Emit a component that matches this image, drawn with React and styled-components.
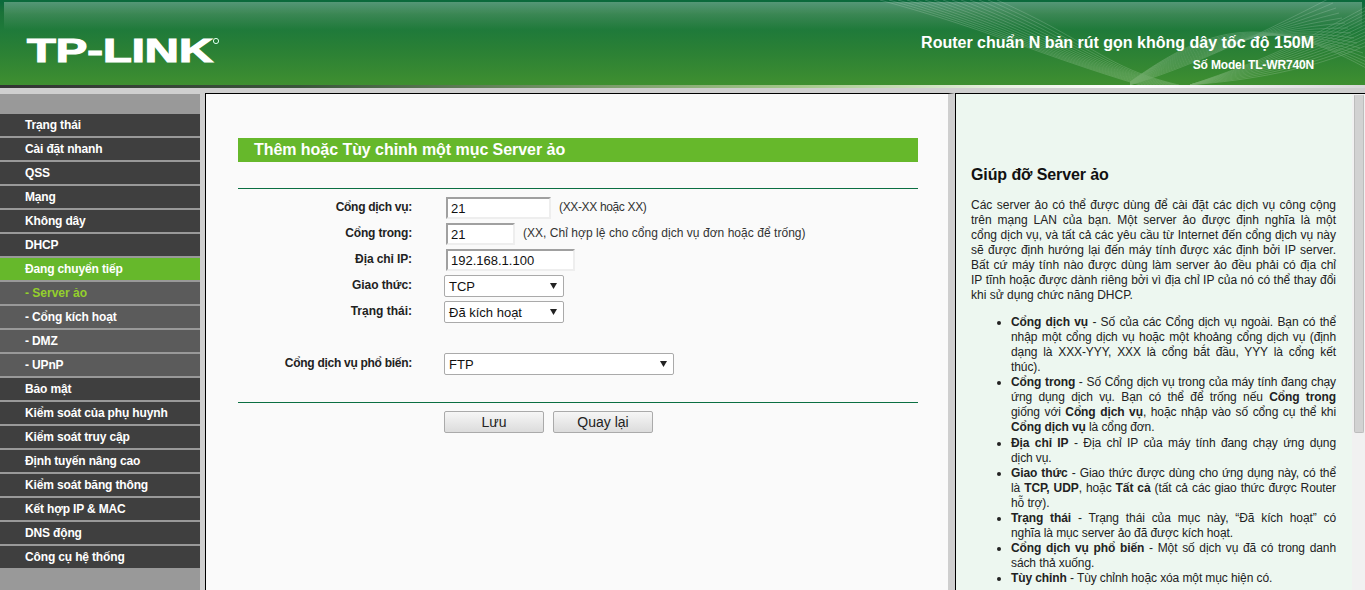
import React from "react";
import styled, { createGlobalStyle } from "styled-components";

const Global = createGlobalStyle`
  html, body { margin: 0; padding: 0; height: 100%; overflow: hidden; background: #cfcfcf; }
  #root { height: 100%; }
  * { box-sizing: border-box; }
`;

const Page = styled.div`
  width: 1365px;
  height: 590px;
  display: flex;
  flex-direction: column;
  overflow: hidden;
  font-family: "Liberation Sans", Arial, sans-serif;
  font-size: 12px;
  color: #111;
`;

const Banner = styled.header`
  position: relative;
  flex: 0 0 85px;
  background: linear-gradient(#0b6a3c 0, #0b6a3c 2px, #1a7238 12px, #1f7a3a 30px, #2a8035 50px, #3f8f30 85px);
  overflow: hidden;

  &::before {
    content: "";
    position: absolute;
    top: 2px;
    left: 4px;
    right: 3px;
    height: 28px;
    background: linear-gradient(rgba(255, 255, 255, 0.3), rgba(255, 255, 255, 0.14) 12px, rgba(255, 255, 255, 0));
  }
`;

const BannerArt = styled.svg`
  position: absolute;
  inset: 0;
`;

const Logo = styled.svg`
  position: absolute;
  left: 27px;
  top: 34px;
  overflow: visible;
`;

const BannerText = styled.div`
  position: absolute;
  right: 51px;
  top: 33px;
  text-align: right;
  color: #fff;
  font-weight: bold;
`;

const Product = styled.div`
  font-size: 16px;
  line-height: 20px;
`;

const Model = styled.div`
  font-size: 12px;
  line-height: 14px;
  margin-top: 5px;
  letter-spacing: -0.15px;
`;

const BannerEdge = styled.div`
  flex: 0 0 3px;
  background: linear-gradient(90deg, #333 0, #3a553a 300px, #a5c98a 800px, #e8f0e0 1000px, #fff 1130px, #d8d8d8 1365px);
`;

const Strip = styled.div`
  flex: 0 0 5px;
  background: #cfcfcf;
`;

const Columns = styled.div`
  flex: 1;
  display: flex;
  min-height: 0;
`;

const Sidebar = styled.nav`
  flex: 0 0 205px;
  background: #999;
  border-top: 1px solid #cfcfcf;
  border-right: 5px solid #cfcfcf;
  padding-top: 20px;
  display: flex;
  flex-direction: column;
  gap: 2px;
`;

const NavItem = styled.a`
  height: 22px;
  line-height: 22px;
  padding-left: 25px;
  font-weight: bold;
  font-size: 12px;
  letter-spacing: ${p => (p.$current ? "0" : "-0.15px")};
  background: ${p => (p.$active ? "#66b82b" : p.$sub ? "#5b5b5b" : "#3f3f3f")};
  color: ${p => (p.$current ? "#94d02c" : "#fff")};
  flex: none;
`;

const Main = styled.main`
  flex: 0 0 750px;
  background: #fafafa;
  border-top: 1px solid #000;
  border-left: 1px solid #000;
  border-right: 7px solid #cfcfcf;
  padding: 44px 30px 0 32px;
`;

const SectionTitle = styled.h1`
  margin: 0;
  height: 24px;
  line-height: 23px;
  padding-left: 16px;
  background: #66b82b;
  color: #fff;
  font-size: 16px;
  font-weight: bold;
  letter-spacing: -0.05px;
`;

const Rule = styled.div`
  height: 1px;
  background: #0b6f42;
  margin-top: ${p => p.$top}px;
`;

const Form = styled.div`
  padding-top: 8px;
  display: flex;
  flex-direction: column;
  gap: 4px;
`;

const Row = styled.div`
  display: grid;
  grid-template-columns: 174px 1fr;
  column-gap: 32px;
  align-items: center;
  height: 22px;
  margin-top: ${p => p.$top || 0}px;
`;

const Label = styled.label`
  text-align: right;
  font-weight: bold;
  color: #222;
  font-size: 12px;
  letter-spacing: ${p => p.$spacing ?? -0.28}px;
  padding-bottom: 3px;
`;

const Field = styled.div`
  display: flex;
  align-items: center;
  gap: 8px;
`;

const Input = styled.input`
  width: ${p => p.$w}px;
  height: 22px;
  margin-left: 2px;
  padding: 1px 3px;
  border: 2px solid;
  border-color: #a0a0a0 #eee #eee #a0a0a0;
  background: #fff;
  font: 13px "Liberation Sans", Arial, sans-serif;
  color: #111;
`;

const Hint = styled.span`
  color: #333;
  font-size: 12px;
  letter-spacing: ${p => p.$spacing || 0}px;
  padding-bottom: 3px;
`;

const SelectBox = styled.div`
  width: ${p => p.$w}px;
  height: 22px;
  border: 1px solid #aaa;
  border-radius: 2px;
  background: #fff;
  padding: 0 6px 0 4px;
  display: flex;
  align-items: center;
  justify-content: space-between;
  font-size: 13px;
  color: #111;
`;

const Caret = styled.svg`
  flex: none;
`;

const Buttons = styled.div`
  display: flex;
  gap: 9px;
  padding: 8px 0 0 206px;
`;

const Button = styled.button`
  width: 100px;
  height: 22px;
  padding: 0;
  border: 1px solid #aaa;
  border-radius: 2px;
  background: linear-gradient(#f6f6f6, #dcdcdc);
  font: 14px "Liberation Sans", Arial, sans-serif;
  color: #222;
`;

const Help = styled.aside`
  flex: 1;
  min-width: 0;
  display: flex;
  background: #edf7f0;
  border-top: 1px solid #000;
  border-left: 1px solid #000;
`;

const HelpBody = styled.div`
  flex: 1;
  min-width: 0;
  padding: 72px 16px 0 15px;
  font-size: 12px;
  line-height: 15px;
  text-align: justify;
  color: #222;
`;

const HelpTitle = styled.h2`
  margin: 0 0 14px;
  font-size: 16px;
  line-height: 18px;
  font-weight: bold;
  letter-spacing: -0.1px;
  color: #111;
`;

const Para = styled.p`
  margin: 0;
`;

const List = styled.ul`
  margin: 12px 0 0;
  padding: 0 0 0 40px;
  letter-spacing: -0.1px;

  & > li:nth-child(3) {
    margin-top: 1px;
  }
`;

const Line = styled.span`
  display: block;
  white-space: nowrap;
  text-align: justify;
  text-align-last: justify;
`;

const Scrollbar = styled.div`
  flex: 0 0 13px;
  background: #f1f1f1;
  padding: 1px 1px 0 2px;
`;

const Thumb = styled.div`
  height: 338px;
  background: #d2d2d2;
  border: 1px solid #bdbdbd;
  border-top-color: #d2d2d2;
  border-radius: 0 0 2px 2px;
`;

const nav = [
  ["Trạng thái"], ["Cài đặt nhanh"], ["QSS"], ["Mạng"], ["Không dây"], ["DHCP"],
  ["Đang chuyển tiếp", "active"], ["- Server ảo", "current"], ["- Cổng kích hoạt", "sub"], ["- DMZ", "sub"], ["- UPnP", "sub"],
  ["Bảo mật"], ["Kiểm soát của phụ huynh"], ["Kiểm soát truy cập"], ["Định tuyến nâng cao"], ["Kiểm soát băng thông"],
  ["Kết hợp IP & MAC"], ["DNS động"], ["Công cụ hệ thống"],
];

const wave = [];
for (let i = 0; i < 14; i++) {
  wave.push(`M${880 + i * 9} 0 C ${990 + i * 8} ${30 + i}, ${1040 + i * 5} ${55 + i}, ${1140 + i * 3} 85`);
}
const fan = [];
for (let i = 0; i < 16; i++) {
  fan.push(`M1130 ${85 - i * 0.2} C ${1180 + i * 2} ${70 - i * 3}, ${1250 + i} ${40 - i * 2}, ${1330 + i * 3} ${-2 + i * 5}`);
}
const fan2 = [];
for (let i = 0; i < 12; i++) {
  fan2.push(`M1190 85 C ${1250 + i * 2} ${80 - i * 2}, 1310 ${70 - i * 3}, 1365 ${46 - i * 3.5}`);
}

const Select = ({ w, children }) => (
  <SelectBox $w={w}>
    <span>{children}</span>
    <Caret width="7" height="6" viewBox="0 0 7 6"><path d="M0 0h7L3.5 6z" fill="#222" /></Caret>
  </SelectBox>
);

export default function App() {
  return (
    <Page>
      <Global />
      <Banner>
        <BannerArt width="1365" height="85" viewBox="0 0 1365 85">
          <g fill="none" stroke="#fff" strokeWidth="0.6" opacity="0.28">
            {wave.map((d, i) => <path key={i} d={d} />)}
            {fan.map((d, i) => <path key={i} d={d} />)}
            {fan2.map((d, i) => <path key={i} d={d} />)}
          </g>
        </BannerArt>
        <Logo width="195" height="30" viewBox="0 0 195 30">
          <text x="0" y="28" textLength="186" lengthAdjust="spacingAndGlyphs" fontFamily="Liberation Sans" fontWeight="bold" fontSize="33" fill="#fff" stroke="#fff" strokeWidth="1.2">TP-LINK</text>
          <circle cx="189" cy="7" r="2.6" fill="none" stroke="#dfe" strokeWidth="1" />
        </Logo>
        <BannerText>
          <Product>Router chuẩn N bản rút gọn không dây tốc độ 150M</Product>
          <Model>Số Model TL-WR740N</Model>
        </BannerText>
      </Banner>
      <BannerEdge />
      <Strip />
      <Columns>
        <Sidebar>
          {nav.map(([t, k]) => (
            <NavItem key={t} $active={k === "active"} $current={k === "current"} $sub={k === "sub" || k === "current"}>{t}</NavItem>
          ))}
        </Sidebar>
        <Main>
          <SectionTitle>Thêm hoặc Tùy chỉnh một mục Server ảo</SectionTitle>
          <Rule $top={26} />
          <Form>
            <Row><Label>Cổng dịch vụ:</Label><Field><Input $w={105} defaultValue="21" /><Hint $spacing={-0.35}>(XX-XX hoặc XX)</Hint></Field></Row>
            <Row><Label $spacing={-0.18}>Cổng trong:</Label><Field><Input $w={69} defaultValue="21" /><Hint $spacing={0.04}>(XX, Chỉ hợp lệ cho cổng dịch vụ đơn hoặc để trống)</Hint></Field></Row>
            <Row><Label $spacing={-0.1}>Địa chỉ IP:</Label><Field><Input $w={129} defaultValue="192.168.1.100" /></Field></Row>
            <Row><Label $spacing={-0.08}>Giao thức:</Label><Field><Select w={120}>TCP</Select></Field></Row>
            <Row><Label $spacing={0}>Trạng thái:</Label><Field><Select w={120}>Đã kích hoạt</Select></Field></Row>
            <Row $top={26}><Label>Cổng dịch vụ phổ biến:</Label><Field><Select w={230}>FTP</Select></Field></Row>
          </Form>
          <Rule $top={27} />
          <Buttons><Button>Lưu</Button><Button>Quay lại</Button></Buttons>
        </Main>
        <Help>
          <HelpBody>
            <HelpTitle>Giúp đỡ Server ảo</HelpTitle>
            <Para>
              <Line>Các server ảo có thể được dùng để cài đặt các dịch vụ công cộng</Line>
              <Line>trên mạng LAN của bạn. Một server ảo được định nghĩa là một</Line>
              <Line>cổng dịch vụ, và tất cả các yêu cầu từ Internet đến cổng dịch vụ này</Line>
              <Line>sẽ được định hướng lại đến máy tính được xác định bởi IP server.</Line>
              <Line>Bất cứ máy tính nào được dùng làm server ảo đều phải có địa chỉ</Line>
              <Line>IP tĩnh hoặc được dành riêng bởi vì địa chỉ IP của nó có thể thay đổi</Line>
              khi sử dụng chức năng DHCP.
            </Para>
            <List>
              <li>
                <Line><b>Cổng dịch vụ</b> - Số của các Cổng dịch vụ ngoài. Bạn có thể</Line>
                <Line>nhập một cổng dịch vụ hoặc một khoảng cổng dịch vụ (định</Line>
                <Line>dạng là XXX-YYY, XXX là cổng bắt đầu, YYY là cổng kết</Line>
                thúc).
              </li>
              <li>
                <Line><b>Cổng trong</b> - Số Cổng dịch vụ trong của máy tính đang chạy</Line>
                <Line>ứng dụng dịch vụ. Bạn có thể để trống nếu <b>Cổng trong</b></Line>
                <Line>giống với <b>Cổng dịch vụ</b>, hoặc nhập vào số cổng cụ thể khi</Line>
                <b>Cổng dịch vụ</b> là cổng đơn.
              </li>
              <li>
                <Line><b>Địa chỉ IP</b> - Địa chỉ IP của máy tính đang chạy ứng dụng</Line>
                dịch vụ.
              </li>
              <li>
                <Line><b>Giao thức</b> - Giao thức được dùng cho ứng dụng này, có thể</Line>
                <Line>là <b>TCP, UDP</b>, hoặc <b>Tất cả</b> (tất cả các giao thức được Router</Line>
                hỗ trợ).
              </li>
              <li>
                <Line><b>Trạng thái</b> - Trạng thái của mục này, “Đã kích hoạt” có</Line>
                nghĩa là mục server ảo đã được kích hoạt.
              </li>
              <li>
                <Line><b>Cổng dịch vụ phổ biến</b> - Một số dịch vụ đã có trong danh</Line>
                sách thả xuống.
              </li>
              <li><b>Tùy chỉnh</b> - Tùy chỉnh hoặc xóa một mục hiện có.</li>
            </List>
          </HelpBody>
          <Scrollbar><Thumb /></Scrollbar>
        </Help>
      </Columns>
    </Page>
  );
}
